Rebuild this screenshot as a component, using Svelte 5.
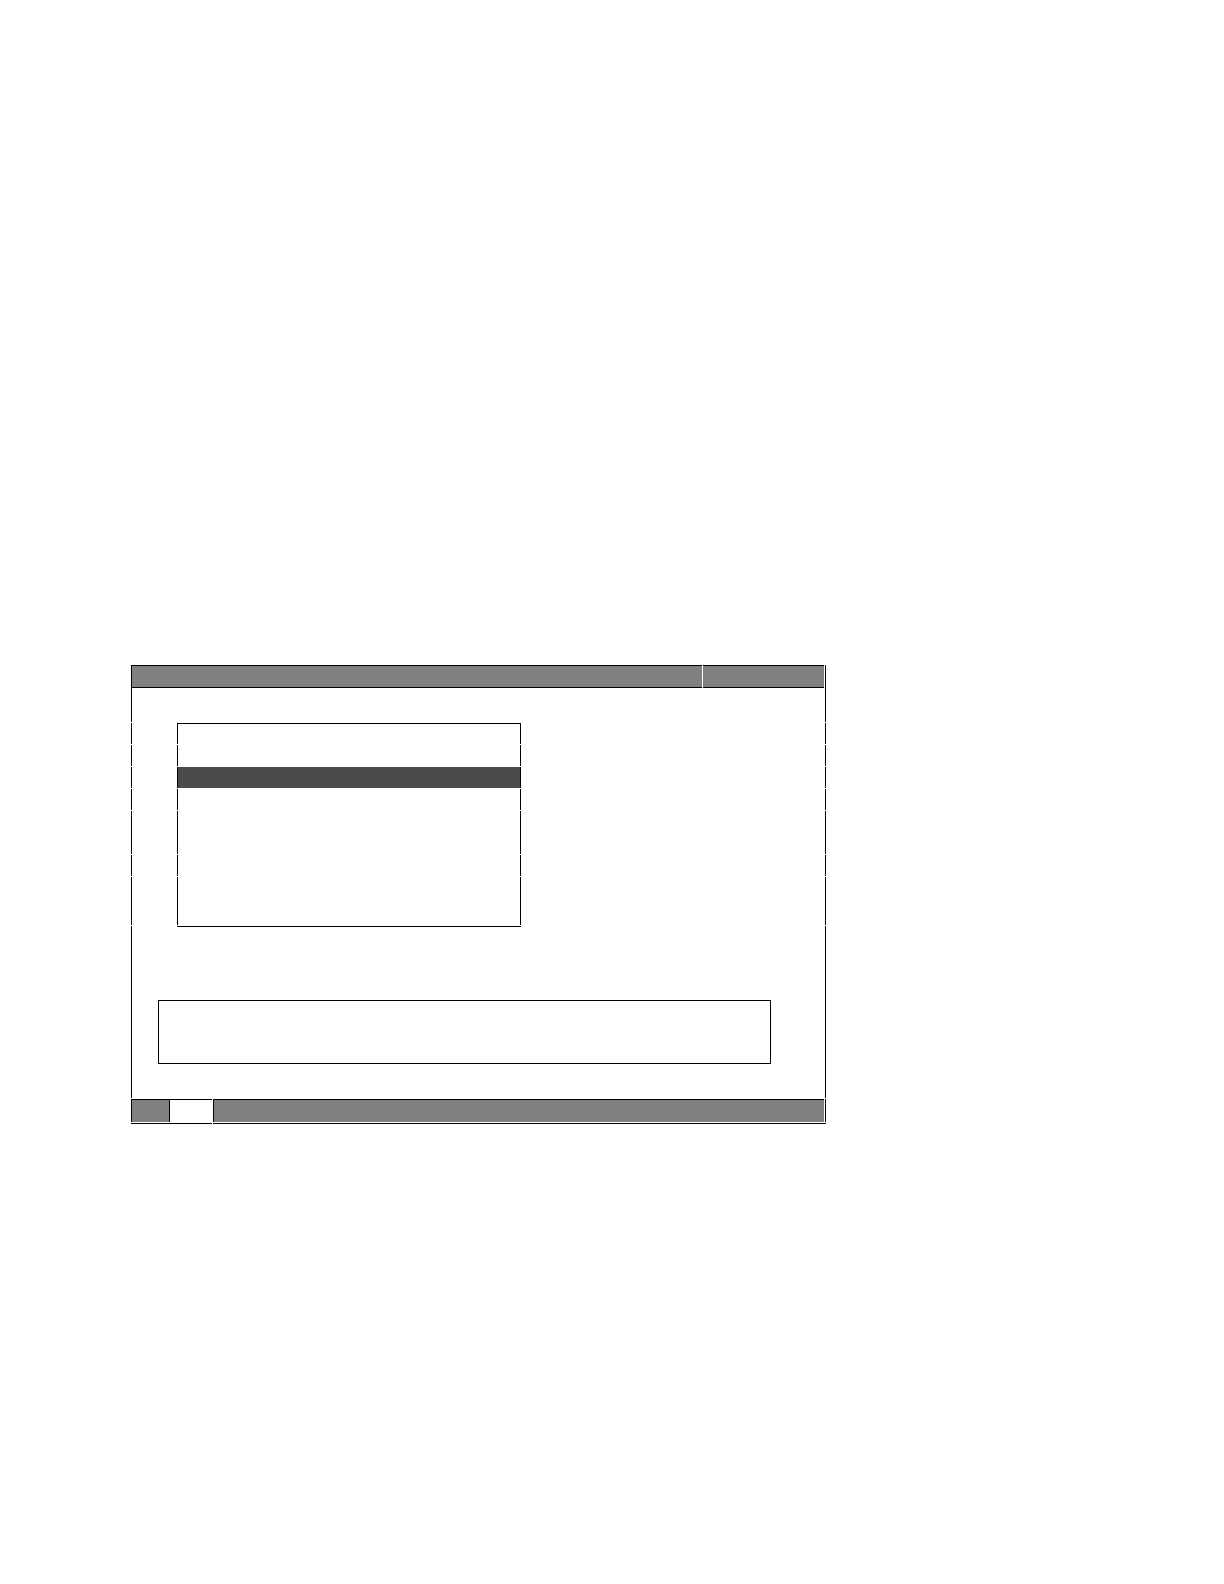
<script>
  // segment heights of the menu, split by a 1px gap
  const menuRows = [
    { size: 'single' },
    { size: 'single' },
    { size: 'single', selected: true },
    { size: 'single' },
    { size: 'double' },
    { size: 'single' },
    { size: 'last' }
  ];
</script>

<main class="page">
  <section class="screen">
    <header class="title-bar">
      <div class="title"></div>
      <div class="status"></div>
    </header>
    <div class="segment spacer"></div>

    <div class="rows">
      {#each menuRows as row, i}
        <div class="segment {row.size}">
          <div class="menu-row" class:first={i === 0} class:selected={row.selected}></div>
        </div>
      {/each}
    </div>

    <div class="segment message-area">
      <div class="menu-end"></div>
      <div class="message"></div>
    </div>

    <footer class="key-bar">
      <div class="keys">
        <div class="key"></div>
        <div class="key active"></div>
      </div>
      <div class="key-rest"></div>
    </footer>
    <div class="base">
      <div class="base-keys"></div>
      <div class="base-rest"></div>
    </div>
  </section>
</main>

<style>
  :global(body) {
    margin: 0;
    background: #fff;
  }

  .page {
    box-sizing: border-box;
    min-height: 100vh;
    padding: 665px 131px 0;
    font-family: "Liberation Sans", Arial, sans-serif;
  }

  .page * {
    box-sizing: border-box;
  }

  .screen {
    max-width: 695px;
  }

  .title-bar {
    display: flex;
    gap: 1px;
    height: 23px;
    padding-right: 1px;
    border-right: 1px solid #000;
  }

  .title,
  .status {
    border: solid #000;
    border-width: 1px 0;
    background: #808080;
  }

  .title {
    flex: 1;
    border-left-width: 1px;
  }

  .status {
    width: 121px;
  }

  .segment {
    border: solid #000;
    border-width: 0 1px;
  }

  .spacer {
    height: 34px;
    margin-bottom: 1px;
  }

  .rows {
    display: grid;
    gap: 1px;
  }

  .single {
    height: 21px;
  }

  .double {
    height: 43px;
  }

  .last {
    height: 48px;
  }

  .menu-row {
    width: 344px;
    height: 100%;
    margin-left: 45px;
    border: solid #000;
    border-width: 0 1px;
  }

  .menu-row.first {
    border-top-width: 1px;
  }

  .menu-row.selected {
    background: #4b4b4b;
  }

  .message-area {
    height: 172px;
    margin-top: 1px;
  }

  .menu-end {
    width: 344px;
    height: 1px;
    margin-left: 45px;
    background: #000;
  }

  .message {
    height: 64px;
    margin: 73px 54px 0 26px;
    border: 1px solid #000;
  }

  .key-bar {
    display: flex;
    gap: 1px;
    height: 23px;
    margin-top: 1px;
    padding-right: 1px;
    border-right: 1px solid #000;
  }

  .keys {
    display: flex;
    border-top: 1px solid #000;
  }

  .key {
    width: 38px;
    border-left: 1px solid #000;
    background: #808080;
  }

  .key.active {
    width: 43px;
    background: #fff;
  }

  .key-rest {
    flex: 1;
    border: solid #000;
    border-width: 1px 0 0 1px;
    background: #808080;
  }

  .base {
    display: flex;
    gap: 1px;
    height: 1px;
    margin-top: 1px;
  }

  .base-keys {
    width: 81px;
    background: #000;
  }

  .base-rest {
    flex: 1;
    background: #000;
  }
</style>
